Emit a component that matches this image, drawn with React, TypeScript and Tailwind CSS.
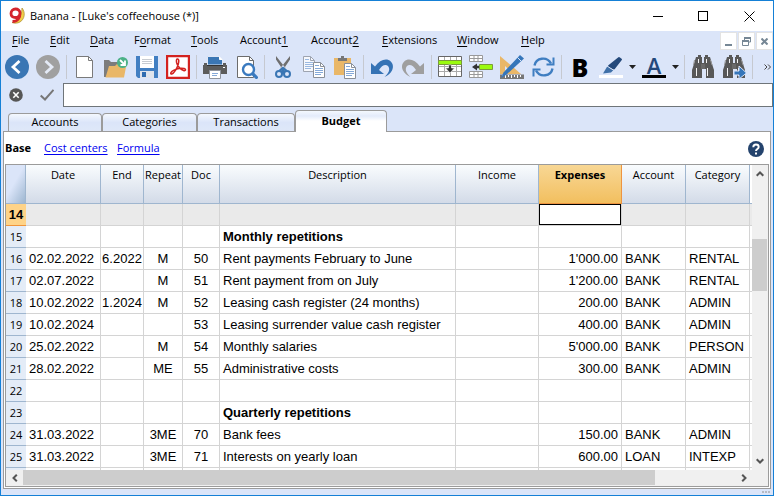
import React from "react";

const UI = "font-['Open_Sans','Noto_Sans',sans-serif]";
const CELL = "font-['Liberation_Sans',Arial,sans-serif]";

function Icon({ children }: { children: React.ReactNode }) {
  return (
    <svg width="24" height="24" viewBox="0 0 24 24" fill="none" aria-hidden="true" className="block shrink-0">
      {children}
    </svg>
  );
}

function Tool({ label, children }: { label: string; children: React.ReactNode }) {
  return (
    <button type="button" aria-label={label} className="flex h-6 w-[31px] shrink-0 items-center pl-1">
      {children}
    </button>
  );
}

function DropArrow({ label }: { label: string }) {
  return (
    <button type="button" aria-label={label} className="flex h-6 w-3 shrink-0 items-center justify-center">
      <svg width="7" height="4" viewBox="0 0 7 4" aria-hidden="true">
        <path d="M0 0h7L3.5 4z" fill="#222" />
      </svg>
    </button>
  );
}

function Separator() {
  return (
    <div className="flex h-6 w-[6px] shrink-0 justify-center">
      <div className="w-px bg-[#c6c9d0]" />
    </div>
  );
}

function SheetLines({ x, y }: { x: number; y: number }) {
  return (
    <g>
      <path d={`M${x + 0.5} ${y + 0.5}h7l4 4v11h-11z`} fill="#fff" stroke="#8a8f98" />
      <path d={`M${x + 7.5} ${y + 0.5}v4h4`} stroke="#8a8f98" />
      <path
        d={`M${x + 2} ${y + 3.5}h4M${x + 2} ${y + 6.5}h8M${x + 2} ${y + 8.5}h8M${x + 2} ${y + 10.5}h8M${x + 2} ${y + 12.5}h6`}
        stroke="#85a9d8"
      />
    </g>
  );
}

function Binoculars() {
  return (
    <g>
      <path d="M5 2h2V0h3v2h1v6h2V2h1V0h3v2h2l3 10 1 3v8h-8v-9h-4v9H1v-8l1-3z" fill="#585858" />
      <path d="M10 9h4v5h-4z" fill="#6a6a6a" />
      <path d="M5.500 13v8M16.500 13v8M7.500 4v4M15.500 4v4" stroke="#f4f4f4" />
      <path d="M3.500 5l-1 5M19.500 5l1.500 5" stroke="#999" />
    </g>
  );
}

function Toolbar() {
  return (
    <div role="toolbar" aria-label="Main" className="flex h-[33px] items-start pt-[5px]">
      <Tool label="Back">
        <Icon>
          <circle cx="12" cy="12" r="12" fill="#3a76b4" />
          <path d="M14.500 6L8 12l6.500 6" stroke="#fff" strokeWidth="2.800" />
        </Icon>
      </Tool>
      <Tool label="Forward">
        <Icon>
          <circle cx="12" cy="12" r="12" fill="#a0a0a0" />
          <path d="M9.500 6L16 12l-6.500 6" stroke="#e4eaf6" strokeWidth="2.800" />
        </Icon>
      </Tool>
      <Separator />
      <Tool label="New">
        <Icon>
          <path d="M3.500 1.500h12l4 4v17h-16z" fill="#fff" stroke="#7a7a7a" />
          <path d="M15.500 1.500v4h4" stroke="#7a7a7a" />
        </Icon>
      </Tool>
      <Tool label="Open">
        <Icon>
          <path d="M0 5h5l2 2h8v15H0z" fill="#7c7c7c" />
          <path d="M5 11h6l2-2h9v3l-2 10.500H1.500z" fill="#e9b768" />
          <circle cx="18.500" cy="7.500" r="5.500" fill="#4cb187" />
          <path d="M16 5l4 4M21 5.500V10h-4.500" stroke="#fff" strokeWidth="1.800" />
        </Icon>
      </Tool>
      <Tool label="Save">
        <Icon>
          <path d="M1 1h22v22H3l-2-2z" fill="#427fc2" />
          <path d="M5 1h14v12H5z" fill="#fff" />
          <path d="M7 4.500h10M7 6.500h10M7 8.500h10" stroke="#c8ccd2" />
          <path d="M5 16h14v7H5z" fill="#dfe4ec" />
          <path d="M7 17h4v5H7z" fill="#2f6cb0" />
        </Icon>
      </Tool>
      <Tool label="Create PDF">
        <Icon>
          <path d="M1 1h22v22H1z" fill="#fff" stroke="#d3221f" strokeWidth="2.400" />
          <path
            d="M11.200 4c1.800-.6 2 2.500 1 5.500C11.200 13 8 18.500 5.800 19c-1.800.2-1.300-2.200 1.700-3.600 3.500-1.700 8-2.300 10.500-1.800 2.500.6 1.700 2.500-.5 1.900C14.200 14.700 11.200 10.500 10.600 7.500 10.300 5.800 10.400 4.300 11.200 4z"
            stroke="#d3221f"
            strokeWidth="1.500"
          />
        </Icon>
      </Tool>
      <Separator />
      <Tool label="Print">
        <Icon>
          <path d="M1 8h22v2h1v9H0v-9h1z" fill="#5c5c5c" />
          <path d="M4.500 10V1.500h12l3 3V10z" fill="#3a76b4" stroke="#dfe7f6" />
          <path d="M16.500 1.500v3h3" fill="#fff" stroke="#fff" />
          <path d="M4 10h16v1H4z" fill="#333" />
          <path d="M6.500 15.500h11v8h-11z" fill="#fff" stroke="#8f959e" />
          <path d="M9 18.500h6M9 20.500h5" stroke="#85a9d8" />
          <path d="M20 12h2v1h-2z" fill="#fff" />
        </Icon>
      </Tool>
      <Tool label="Print preview">
        <Icon>
          <path d="M3.500 1.500h12l4 4v17h-16z" fill="#fff" stroke="#6c6c6c" />
          <path d="M15.500 1.500v4h4" stroke="#6c6c6c" />
          <circle cx="14.500" cy="14.500" r="5.500" fill="#fff" stroke="#3a7abf" strokeWidth="2.400" />
          <path d="M18.500 18.500l5 5" stroke="#3a7abf" strokeWidth="3.200" />
        </Icon>
      </Tool>
      <Separator />
      <Tool label="Cut">
        <Icon>
          <path d="M5 1v3.500L12 15l2.500-2zM19 1v3.500L12 15l-2.500-2z" fill="#6f6f6f" />
          <circle cx="8" cy="19" r="3" stroke="#3a76b4" strokeWidth="2" />
          <circle cx="16" cy="19" r="3" stroke="#3a76b4" strokeWidth="2" />
          <path d="M8.500 16L12 13l3.500 3" stroke="#3a76b4" strokeWidth="2.400" />
          <path d="M12 13v6" stroke="#3a76b4" strokeWidth="2" />
        </Icon>
      </Tool>
      <Tool label="Copy">
        <Icon>
          <g opacity="0.75">
            <SheetLines x={1} y={1} />
          </g>
          <SheetLines x={11} y={7} />
        </Icon>
      </Tool>
      <Tool label="Paste">
        <Icon>
          <path d="M1 3h17v17H1z" fill="#e9b768" />
          <path d="M5 6V3h3V1h3v2h3v3z" fill="#777" />
          <SheetLines x={11} y={8} />
        </Icon>
      </Tool>
      <Separator />
      <Tool label="Undo">
        <Icon>
          <path d="M1 8l4 3.500C9 6 14 3.500 18.500 5c4.500 2 5.500 6.500 3.500 10.500-1.500 3-4 5-7.500 6.500 4.500-4 6-8 3.500-11-2.500-2.500-6.500-.5-9 4l5 4H1z" fill="#3573b5" />
        </Icon>
      </Tool>
      <Tool label="Redo">
        <Icon>
          <path d="M23 8l-4 3.500C15 6 10 3.500 5.500 5 1 7 0 11.500 2 15.500c1.500 3 4 5 7.500 6.500-4.500-4-6-8-3.500-11 2.500-2.500 6.500-.5 9 4l-5 4h13z" fill="#9f9f9f" />
        </Icon>
      </Tool>
      <Separator />
      <Tool label="Insert row">
        <Icon>
          <path d="M0.500 1.500h23v20H.5z" fill="#fff" stroke="#666" />
          <path d="M6.500 2v19M12.500 2v19M18.500 2v19M1 11.500h22M1 16.500h22" stroke="#aaa" />
          <path d="M0 5h24v5H0z" fill="#7a9b3a" />
          <path d="M1 6h22v3H1z" fill="#9bfb10" />
          <path d="M10.500 10h3v3h3L12 18l-4.500-5h3z" fill="#333" stroke="#fff" strokeWidth="0.600" />
        </Icon>
      </Tool>
      <Tool label="Add row">
        <Icon>
          <path d="M.5.500h13v6H.5zM.5 16.500h13v6H.5z" fill="#fff" stroke="#999" />
          <path d="M5 0v7M9 0v7M5 16v7M9 16v7M0 3.500h14M0 19.500h14" stroke="#999" />
          <path d="M10.500 9.500h13v5h-13z" fill="#9bfb10" stroke="#7a9b3a" />
          <path d="M10 10.800H8V8.500L3 12l5 3.500v-2.300h2z" fill="#333" />
        </Icon>
      </Tool>
      <Tool label="Design">
        <Icon>
          <path d="M0 1l21 18H0z" fill="#e9b768" />
          <path d="M5 11l5 4.500H5z" fill="#dbe5f9" />
          <path d="M0 19.500h24V24H0z" fill="#777" />
          <path d="M2.500 20v2M5.500 20v3M8.500 20v2M11.500 20v3M14.500 20v2M17.500 20v3M20.500 20v2" stroke="#fff" />
          <path d="M20 0l4 3.500L6 20l-5 3 2.500-5.500z" fill="#3576ba" />
          <path d="M17.500 2.500l4 4" stroke="#dbe5f9" />
        </Icon>
      </Tool>
      <Tool label="Recalculate">
        <Icon>
          <path d="M3.500 10.500C5 2.500 16 1 20 8.500M21.500 13.500C20 21.500 9 23 5 15.500" stroke="#3f7ec1" strokeWidth="2.400" />
          <path d="M22.500 2.500v7h-7M2.500 21.500v-7h7" stroke="#3f7ec1" strokeWidth="2" />
        </Icon>
      </Tool>
      <Separator />
      <Tool label="Bold">
        <span className={`${UI} w-6 text-center text-[25px] leading-9 font-extrabold text-black`}>B</span>
      </Tool>
      <Tool label="Highlight colour">
        <Icon>
          <path d="M20 3l2 1.500-7 9-5-2.500z" fill="#24497b" stroke="#24497b" strokeWidth="2" strokeLinejoin="round" />
          <path d="M8.500 11l6 4-2.500 2.500-8 1z" fill="#3f70a8" />
          <path d="M8 11l7 4.500" stroke="#dbe5f9" />
          <path d="M0 20h24v3H0z" fill="#fff" />
        </Icon>
      </Tool>
      <DropArrow label="Choose highlight colour" />
      <Tool label="Text colour">
        <span className="flex h-6 w-6 flex-col items-center">
          <span className={`${UI} h-5 text-[22px] leading-5 font-semibold text-[#24497b]`}>A</span>
          <span className="h-[3px] w-6 bg-black" />
        </span>
      </Tool>
      <DropArrow label="Choose text colour" />
      <Separator />
      <Tool label="Find">
        <Icon>
          <Binoculars />
        </Icon>
      </Tool>
      <Tool label="Find next">
        <Icon>
          <Binoculars />
          <path d="M12 16h5v-5l7.500 7-7.500 6v-4h-5z" fill="#3576ba" stroke="#dbe5f9" />
        </Icon>
      </Tool>
      <Separator />
      <button type="button" aria-label="More tools" className="ml-auto flex h-6 w-3 items-center justify-center">
        <svg width="7" height="6" viewBox="0 0 7 6" fill="none" aria-hidden="true">
          <path d="M.5.500L3 3 .5 5.500M4 .5L6.500 3 4 5.500" stroke="#444" />
        </svg>
      </button>
    </div>
  );
}

const menus: [string, string, string, string][] = [
  ["", "F", "ile", "w-[38px]"],
  ["", "E", "dit", "w-[40px]"],
  ["", "D", "ata", "w-[44px]"],
  ["F", "o", "rmat", "w-[57px]"],
  ["", "T", "ools", "w-[49px]"],
  ["Account", "1", "", "w-[71px]"],
  ["Account", "2", "", "w-[71px]"],
  ["", "E", "xtensions", "w-[75px]"],
  ["", "W", "indow", "w-[64px]"],
  ["", "H", "elp", "w-[40px]"],
];

const columns = [
  { name: "Date", width: "w-[75px]" },
  { name: "End", width: "w-[43px]" },
  { name: "Repeat", width: "w-[39px]" },
  { name: "Doc", width: "w-[37px]" },
  { name: "Description", width: "" },
  { name: "Income", width: "w-[83px]" },
  { name: "Expenses", width: "w-[83px]" },
  { name: "Account", width: "w-[64px]" },
  { name: "Category", width: "w-[64px]" },
];

type Row = {
  n: number;
  date?: string;
  end?: string;
  repeat?: string;
  doc?: string;
  text?: string;
  title?: boolean;
  expenses?: string;
  account?: string;
  category?: string;
};

const rows: Row[] = [
  { n: 15, text: "Monthly repetitions", title: true },
  { n: 16, date: "02.02.2022", end: "6.2022", repeat: "M", doc: "50", text: "Rent payments February to June", expenses: "1'000.00", account: "BANK", category: "RENTAL" },
  { n: 17, date: "02.07.2022", repeat: "M", doc: "51", text: "Rent payment from on July", expenses: "1'200.00", account: "BANK", category: "RENTAL" },
  { n: 18, date: "10.02.2022", end: "1.2024", repeat: "M", doc: "52", text: "Leasing cash register (24 months)", expenses: "200.00", account: "BANK", category: "ADMIN" },
  { n: 19, date: "10.02.2024", doc: "53", text: "Leasing surrender value cash register", expenses: "400.00", account: "BANK", category: "ADMIN" },
  { n: 20, date: "25.02.2022", repeat: "M", doc: "54", text: "Monthly salaries", expenses: "5'000.00", account: "BANK", category: "PERSON" },
  { n: 21, date: "28.02.2022", repeat: "ME", doc: "55", text: "Administrative costs", expenses: "300.00", account: "BANK", category: "ADMIN" },
  { n: 22 },
  { n: 23, text: "Quarterly repetitions", title: true },
  { n: 24, date: "31.03.2022", repeat: "3ME", doc: "70", text: "Bank fees", expenses: "150.00", account: "BANK", category: "ADMIN" },
  { n: 25, date: "31.03.2022", repeat: "3ME", doc: "71", text: "Interests on yearly loan", expenses: "600.00", account: "LOAN", category: "INTEXP" },
];

const td = "h-[22px] overflow-hidden border-r border-b border-[#d4d4d4] p-0 whitespace-nowrap";

function BudgetTable() {
  return (
    <table className="w-full table-fixed border-separate border-spacing-0">
      <colgroup>
        <col className="w-5" />
        {columns.map((c) => (
          <col key={c.name} className={c.width} />
        ))}
        <col className="w-[2px]" />
      </colgroup>
      <thead>
        <tr className={`${UI} text-[11px]`}>
          <th className="h-[39px] border-r border-b border-[#9fb6cf] bg-[linear-gradient(120deg,#dbe5f9_45%,#9db6d0)] p-0" />
          {columns.map((c) => (
            <th
              key={c.name}
              className={
                c.name === "Expenses"
                  ? "h-[39px] border-r border-b border-[#ee9440] bg-linear-to-b from-[#f8d794] to-[#f2bf5e] p-0 pt-[2px] align-top leading-4 font-bold"
                  : "h-[39px] border-r border-b border-[#9fb6cf] bg-linear-to-b from-[#f9fcfe] to-[#d3dbe8] p-0 pt-[2px] align-top leading-4 font-normal"
              }
            >
              {c.name}
            </th>
          ))}
          <td className="border-b border-[#9fb6cf] p-0" />
        </tr>
      </thead>
      <tbody className={`${CELL} text-[13px] leading-4`}>
        <tr className="bg-[#eaeaea]">
          <th className="h-[22px] border-b border-[#f0943a] bg-[#fed388] p-0 text-center font-bold">14</th>
          {columns.map((c) =>
            c.name === "Expenses" ? (
              <td key={c.name} className={td}>
                <input
                  aria-label="Expenses, row 14"
                  className="block h-[21px] w-full border border-black bg-white px-1 text-right outline-none"
                />
              </td>
            ) : (
              <td key={c.name} className={td} />
            ),
          )}
          <td className="border-b border-[#d4d4d4] p-0" />
        </tr>
        {rows.map((r) => (
          <tr key={r.n}>
            <th className={`${UI} h-[22px] border-b border-[#9fb6cf] bg-[#e4ecf7] p-0 text-center text-[11px] font-normal`}>
              {r.n}
            </th>
            <td className={`${td} pl-[3px]`}>{r.date}</td>
            <td className={`${td} text-center`}>{r.end}</td>
            <td className={`${td} text-center`}>{r.repeat}</td>
            <td className={`${td} text-center`}>{r.doc}</td>
            <td className={`${td} pl-[3px] ${r.title ? "font-bold" : ""}`}>{r.text}</td>
            <td className={td} />
            <td className={`${td} pr-[3px] text-right`}>{r.expenses}</td>
            <td className={`${td} pl-[3px]`}>{r.account}</td>
            <td className={`${td} pl-[3px]`}>{r.category}</td>
            <td className="border-b border-[#d4d4d4] p-0" />
          </tr>
        ))}
        <tr aria-hidden="true">
          <td className="h-[2px] bg-[#e4ecf7] p-0" />
          {columns.map((c) => (
            <td key={c.name} className="h-[2px] border-r border-[#d4d4d4] p-0" />
          ))}
          <td className="p-0" />
        </tr>
      </tbody>
    </table>
  );
}

function Chevron({ d }: { d: string }) {
  return (
    <svg width="8" height="8" viewBox="0 0 8 8" fill="none" aria-hidden="true">
      <path d={d} stroke="#555" strokeWidth="2" />
    </svg>
  );
}

const tab =
  "flex h-[18px] items-center justify-center rounded-t-[4px] border border-b-0 border-[#9b9b9b] bg-linear-to-b from-[#f4f8fe] via-[#dbe5f9] to-[#dfe8f9]";
const mdi = "flex h-[18px] w-[17px] items-center justify-center border border-[#e3e3e3] bg-white";

export default function App() {
  return (
    <div className={`${UI} flex min-h-screen w-full flex-col border border-[#1580d6] bg-[#dbe5f9] text-[11px] text-black`}>
      <header className="flex h-[30px] items-center bg-white pl-2">
        <svg width="17" height="18" viewBox="0 0 17 18" fill="none" aria-hidden="true">
          <path d="M13 1c3.500 4 3 11-2 14-2.500 1.500-6 1.500-8 .5 5 0 10-6 10-14.500z" fill="#f1cf4a" stroke="#a98b2c" strokeWidth="0.700" />
          <path d="M11 6c0 2.500-1.500 4.500-4.500 4.500S2 9 2 6.500 4 2 6.500 2 11 3.500 11 6zm0 0c.3 5-2.500 8.500-7.500 8.500" stroke="#d4252c" strokeWidth="2.800" />
        </svg>
        <h1 className="ml-1 flex-1">Banana - [Luke's coffeehouse (*)]</h1>
        <button type="button" aria-label="Minimize" className="flex h-full w-[45px] items-center justify-center">
          <span className="h-px w-[10px] bg-black" />
        </button>
        <button type="button" aria-label="Maximize" className="flex h-full w-[45px] items-center justify-center">
          <span className="h-[10px] w-[10px] border border-black" />
        </button>
        <button type="button" aria-label="Close" className="flex h-full w-[48px] items-center justify-center">
          <svg width="11" height="11" viewBox="0 0 11 11" aria-hidden="true">
            <path d="M.5.500l10 10M10.500.500l-10 10" stroke="#000" />
          </svg>
        </button>
      </header>

      <nav className="flex h-[19px] items-start pl-[11px]">
        {menus.map(([before, key, after, width]) => (
          <button key={before + key + after} type="button" className={`${width} shrink-0 text-left leading-[18px]`}>
            {before}
            <span className="underline underline-offset-2">{key}</span>
            {after}
          </button>
        ))}
        <div className="ml-auto flex gap-px pt-px">
          <button type="button" aria-label="Minimize document" className={mdi}>
            <svg width="9" height="9" viewBox="0 0 9 9" aria-hidden="true"><path d="M1 7h7v2H1z" fill="#768795" /></svg>
          </button>
          <button type="button" aria-label="Restore document" className={mdi}>
            <svg width="9" height="9" viewBox="0 0 9 9" fill="none" aria-hidden="true">
              <path d="M2.500 3V1h6v4H7M.5 4h6v4.500h-6z" stroke="#768795" />
              <path d="M0 4h7M2 1h7" stroke="#768795" strokeWidth="2" />
            </svg>
          </button>
          <button type="button" aria-label="Close document" className={mdi}>
            <svg width="7" height="7" viewBox="0 0 7 7" aria-hidden="true">
              <path d="M.5.500l6 6M6.500.500l-6 6" stroke="#768795" strokeWidth="2" />
            </svg>
          </button>
        </div>
      </nav>

      <Toolbar />

      <div className="flex h-6 items-center">
        <button type="button" aria-label="Cancel entry" className="flex w-[31px] items-center pl-2">
          <svg width="14" height="14" viewBox="0 0 14 14" aria-hidden="true">
            <circle cx="7" cy="7" r="6.800" fill="#565656" />
            <path d="M4.300 4.300l5.400 5.400M9.700 4.300L4.300 9.700" stroke="#fff" strokeWidth="1.600" />
          </svg>
        </button>
        <button type="button" aria-label="Accept entry" className="flex w-[31px] items-center pl-2">
          <svg width="14" height="12" viewBox="0 0 14 12" fill="none" aria-hidden="true">
            <path d="M.7 6.500L5 10.500 13.500.800" stroke="#777" strokeWidth="2" />
          </svg>
        </button>
        <input aria-label="Cell content" className="h-6 min-w-0 flex-1 border border-[#6f7579] bg-white px-1 outline-none" />
      </div>

      <div role="tablist" className="flex h-6 items-end pl-[7px]">
        <button type="button" role="tab" aria-selected="false" className={`${tab} w-[94px]`}>Accounts</button>
        <button type="button" role="tab" aria-selected="false" className={`${tab} w-[95px]`}>Categories</button>
        <button type="button" role="tab" aria-selected="false" className={`${tab} w-[98px]`}>Transactions</button>
        <button
          type="button"
          role="tab"
          aria-selected="true"
          className="z-10 -mb-px flex h-[22px] w-[92px] items-center justify-center rounded-t-[4px] border border-b-0 border-[#9b9b9b] bg-[linear-gradient(#f4f8fe,#e3ebfa_5px,#fff_10px)] font-bold"
        >
          Budget
        </button>
      </div>

      <main className="mr-[2px] ml-[2px] border border-[#9b9b9b] bg-white px-px pb-px">
        <div className="flex h-8 items-center pt-px pr-[5px]">
          <strong className="w-[39px] font-bold">Base</strong>
          <a href="#cost-centers" className="w-[73px] text-[#0000f0] underline underline-offset-2">Cost centers</a>
          <a href="#formula" className="text-[#0000f0] underline underline-offset-2">Formula</a>
          <button type="button" aria-label="Help" className="ml-auto flex">
            <svg width="16" height="16" viewBox="0 0 16 16" fill="none" aria-hidden="true">
              <circle cx="8" cy="8" r="8" fill="#24436d" />
              <path d="M5.300 6.200C5.300 2.600 10.700 2.800 10.700 6c0 2-2.700 2-2.700 4" stroke="#fff" strokeWidth="1.900" />
              <path d="M7 11.500h2v2H7z" fill="#fff" />
            </svg>
          </button>
        </div>
        <div className="border border-[#9b9b9b]">
          <div className="flex">
            <div className="min-w-0 flex-1">
              <BudgetTable />
            </div>
            <div className="flex w-4 flex-col bg-[#f0f0f0]">
              <button type="button" aria-label="Scroll up" className="flex h-[18px] items-center justify-center">
                <Chevron d="M.7 5.800L4 2.500l3.300 3.300" />
              </button>
              <div className="mt-14 mr-px h-[52px] bg-[#cdcdcd]" />
              <button type="button" aria-label="Scroll down" className="mt-auto flex h-[18px] items-center justify-center">
                <Chevron d="M.7 2.200L4 5.500l3.300-3.300" />
              </button>
            </div>
          </div>
          <div className="flex h-4 bg-[#f0f0f0] pr-4">
            <button type="button" aria-label="Scroll left" className="flex w-[17px] items-center justify-center">
              <Chevron d="M5.800.700L2.500 4l3.300 3.300" />
            </button>
            <div className="flex flex-1 pr-20">
              <div className="h-[15px] flex-1 bg-[#cdcdcd]" />
            </div>
            <button type="button" aria-label="Scroll right" className="flex w-[17px] items-center justify-center">
              <Chevron d="M2.200.700L5.500 4 2.200 7.300" />
            </button>
          </div>
        </div>
      </main>
      <footer className="flex h-[6px] items-center justify-end gap-px pr-[3px]">
        <span className="h-[2px] w-[2px] bg-[#b5bac4]" />
        <span className="h-[2px] w-[2px] bg-[#b5bac4]" />
        <span className="h-[2px] w-[2px] bg-[#b5bac4]" />
      </footer>
    </div>
  );
}
